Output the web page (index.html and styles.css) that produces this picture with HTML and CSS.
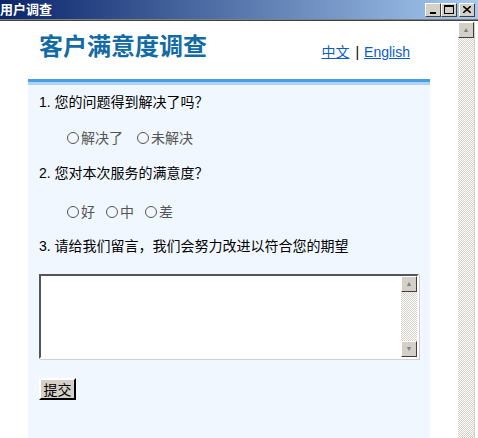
FILE: index.html
```html
<!DOCTYPE html>
<html lang="zh-CN">
<head>
    <meta charset="UTF-8">
    <title>用户调查</title>
    <link rel="stylesheet" href="styles.css">
</head>
<body>
    <div class="window">
        <div class="titlebar">
            <span class="title">用户调查</span>
            <div class="ctrls">
                <div class="tbtn"><span class="min"></span></div>
                <div class="tbtn"><span class="max"></span></div>
                <div class="tbtn close">
                    <svg width="8" height="7" viewBox="0 0 8 7"><path d="M0 0L8 7M8 0L0 7" stroke="#000" stroke-width="1.6"/></svg>
                </div>
            </div>
        </div>
        <div class="client">
            <div class="page">
                <div class="survey">
                    <div class="header">
                        <h1>客户满意度调查</h1>
                        <div class="lang"><a href="#">中文</a><span class="sep">|</span><a href="#">English</a></div>
                    </div>
                    <form class="panel">
                        <p class="q q1">1. 您的问题得到解决了吗？</p>
                        <div class="opts o1">
                            <label><i class="radio"></i>解决了</label>
                            <label><i class="radio"></i>未解决</label>
                        </div>
                        <p class="q q2">2. 您对本次服务的满意度？</p>
                        <div class="opts o2">
                            <label><i class="radio"></i>好</label>
                            <label><i class="radio"></i>中</label>
                            <label><i class="radio"></i>差</label>
                        </div>
                        <p class="q q3">3. 请给我们留言，我们会努力改进以符合您的期望</p>
                        <div class="memo">
                            <textarea></textarea>
                            <div class="sbar small">
                                <div class="sbtn">▲</div>
                                <div class="track"></div>
                                <div class="sbtn">▼</div>
                            </div>
                        </div>
                        <button type="button" class="submit">提交</button>
                    </form>
                </div>
            </div>
            <div class="sbar main">
                <div class="sbtn">▲</div>
                <div class="track"></div>
            </div>
        </div>
    </div>
</body>
</html>
```

FILE: styles.css
```css
body {
    margin: 0;
    font-family: "Liberation Sans", "Noto Sans CJK SC", sans-serif;
}
.window {
    width: 478px;
    height: 438px;
    display: flex;
    flex-direction: column;
    background: #d4d0c8;
    overflow: hidden;
}
.titlebar {
    height: 19px;
    background: linear-gradient(to right, #0a246a, #a6caf0);
    display: flex;
    align-items: center;
    justify-content: space-between;
    padding-right: 3px;
}
.title {
    color: #fff;
    font-weight: bold;
    font-size: 13px;
    line-height: 19px;
}
.ctrls {
    display: flex;
}
.tbtn {
    width: 14px;
    height: 12px;
    background: #d4d0c8;
    border: 1px solid;
    border-color: #fff #404040 #404040 #fff;
    display: flex;
    align-items: center;
    justify-content: center;
}
.tbtn.close {
    margin-left: 2px;
}
.min {
    width: 6px;
    height: 2px;
    background: #000;
    margin-top: 7px;
}
.max {
    width: 8px;
    height: 6px;
    border: 1px solid #000;
    border-top-width: 2px;
}
.client {
    flex: 1;
    display: flex;
    border-top: 1px solid #808080;
    box-shadow: inset 0 1px #404040;
    padding-top: 2px;
    background: #fff;
}
.page {
    flex: 1;
    background: #fff;
}
.survey {
    width: 402px;
    margin: 0 auto;
    height: 100%;
    display: flex;
    flex-direction: column;
}
.header {
    height: 57px;
    display: flex;
    justify-content: space-between;
    align-items: flex-end;
    padding: 0 20px 0 11px;
}
h1 {
    margin: 0 0 18px 0;
    font-size: 24px;
    line-height: 28px;
    color: #136ba5;
    font-weight: bold;
}
.lang {
    font-size: 14px;
    line-height: 16px;
    margin-bottom: 19px;
    color: #000;
}
.lang a {
    color: #0a5ccc;
}
.sep {
    margin: 0 5px 0 6px;
}
.panel {
    flex: 1;
    border-top: 3px solid #4a9de0;
    background: linear-gradient(#acd4f4 0 3px, #f0f7fe 3px);
    padding: 10px 0 0 11px;
}
.q {
    margin: 0;
    font-size: 14px;
    line-height: 20px;
    color: #000;
}
.opts {
    margin-left: 28px;
    font-size: 14px;
    line-height: 20px;
    color: #555;
    display: flex;
    gap: 14px;
}
.opts label {
    display: flex;
    align-items: center;
}
.radio {
    width: 10px;
    height: 10px;
    border: 1px solid #555;
    border-radius: 50%;
    margin-right: 2px;
}
.o2 {
    gap: 11px;
}
.o1 { margin-top: 16px; }
.q2 { margin-top: 15px; }
.o2 { margin-top: 19px; }
.q3 { margin-top: 14px; }
.memo {
    margin-top: 18px;
    width: 376px;
    height: 81px;
    display: flex;
    background: #fff;
    border: 2px solid;
    border-color: #555 #fff #fff #555;
    box-shadow: 1px 1px #d4d0c8;
}
.memo textarea {
    flex: 1;
    border: none;
    resize: none;
    outline: none;
}
.sbar {
    width: 16px;
    display: flex;
    flex-direction: column;
}
.sbar.main {
    margin-right: 3px;
    border-right: 1px solid #d4d0c8;
}
.sbtn {
    height: 14px;
    background: #d4d0c8;
    border: 1px solid;
    border-color: #fff #404040 #404040 #fff;
    font-size: 7px;
    line-height: 14px;
    text-align: center;
    color: #808080;
}
.track {
    flex: 1;
    background: repeating-conic-gradient(#d4d0c8 0 25%, #fff 0 50%) 0 0 / 2px 2px;
}
.submit {
    margin-top: 19px;
    display: block;
    width: 37px;
    height: 22px;
    padding: 0;
    background: #d4d0c8;
    border: 2px solid;
    border-color: #fff #000 #000 #fff;
    font-family: "Noto Sans CJK SC", sans-serif;
    font-size: 14px;
    line-height: 16px;
    color: #000;
}
```
